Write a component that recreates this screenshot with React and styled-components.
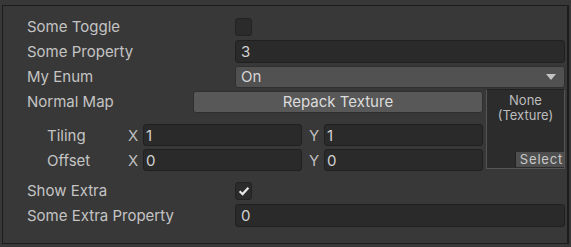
import React from "react";
import styled, { createGlobalStyle } from "styled-components";

const GlobalStyles = createGlobalStyle`
  * {
    margin: 0;
    padding: 0;
    box-sizing: border-box;
  }
  body {
    background: #383838;
    font-family: Inter, "Noto Sans", sans-serif;
    overflow: hidden;
  }
`;

function Check({ checked }) {
  return (
    <Toggle>
      {checked && (
        <svg width="12" height="12" viewBox="0 0 12 12">
          <path d="M1.6 6.2 L4.6 9.1 L10.4 2.8" fill="none" stroke="#e6e6e6" strokeWidth="2.2" />
        </svg>
      )}
    </Toggle>
  );
}

function App() {
  return (
    <>
      <GlobalStyles />
      <Frame>
        <Row>
          <Label>Some Toggle</Label>
          <Check />
        </Row>
        <Row>
          <Label>Some Property</Label>
          <Field>3</Field>
        </Row>
        <Row>
          <Label>My Enum</Label>
          <Enum>
            On
            <Arrow />
          </Enum>
        </Row>
        <TextureBlock>
          <TextureLeft>
            <Row>
              <MapLabel>Normal Map</MapLabel>
              <Button>Repack Texture</Button>
            </Row>
            <SubRows>
              <SubRow>
                <SubLabel>Tiling</SubLabel>
                <Axis>X</Axis>
                <SmallField>1</SmallField>
                <Axis $gap>Y</Axis>
                <SmallField>1</SmallField>
              </SubRow>
              <SubRow>
                <SubLabel>Offset</SubLabel>
                <Axis>X</Axis>
                <SmallField>0</SmallField>
                <Axis $gap>Y</Axis>
                <SmallField>0</SmallField>
              </SubRow>
            </SubRows>
          </TextureLeft>
          <TextureBox>
            <None>
              None
              <br />
              (Texture)
            </None>
            <Select>Select</Select>
          </TextureBox>
        </TextureBlock>
        <Row $top={6}>
          <Label>Show Extra</Label>
          <Check checked />
        </Row>
        <Row>
          <Label>Some Extra Property</Label>
          <Field>0</Field>
        </Row>
      </Frame>
    </>
  );
}

export default App;

const Frame = styled.div`
  margin: 5px 0 0 2px;
  width: 567px;
  height: 239px;
  border: 1px solid #1c1c1c;
  border-right-width: 2px;
  padding: 9px 2px 0 24px;
  display: flex;
  flex-direction: column;
  gap: 2px;
  color: #c4c4c4;
  font-size: 15px;
`;

const Row = styled.div`
  display: flex;
  align-items: center;
  height: 23px;
  margin-top: ${({ $top }) => $top || 0}px;
`;

const Label = styled.div`
  width: 208px;
  flex: none;
  line-height: 23px;
  white-space: nowrap;
`;

const MapLabel = styled(Label)`
  width: 166px;
`;

const Toggle = styled.div`
  width: 17px;
  height: 18px;
  border-radius: 3px;
  background: #2b2b2b;
  border: 1px solid #222;
  display: flex;
  align-items: center;
  justify-content: center;
`;

const Field = styled.div`
  flex: 1;
  height: 23px;
  background: #2a2a2a;
  border: 1px solid #202020;
  border-radius: 3px;
  padding-left: 5px;
  line-height: 21px;
  color: #d2d2d2;
`;

const Enum = styled.div`
  flex: 1;
  height: 22px;
  background: #515151;
  border: 1px solid #303030;
  border-radius: 3px;
  padding: 0 8px 0 5px;
  line-height: 20px;
  color: #d6d6d6;
  display: flex;
  align-items: center;
  justify-content: space-between;
`;

const Arrow = styled.span`
  width: 0;
  height: 0;
  border-left: 5px solid transparent;
  border-right: 5px solid transparent;
  border-top: 6px solid #c4c4c4;
`;

const TextureBlock = styled.div`
  display: flex;
  gap: 3px;
`;

const TextureLeft = styled.div`
  flex: 1;
  display: flex;
  flex-direction: column;
`;

const Button = styled.div`
  flex: 1;
  height: 22px;
  background: #585858;
  border: 1px solid #2f2f2f;
  border-radius: 3px;
  text-align: center;
  line-height: 20px;
  color: #dcdcdc;
`;

const SubRows = styled.div`
  display: flex;
  flex-direction: column;
  gap: 3px;
  margin-top: 11px;
`;

const SubRow = styled.div`
  display: flex;
  align-items: center;
  height: 22px;
`;

const SubLabel = styled.div`
  width: 101px;
  padding-left: 20px;
  flex: none;
`;

const Axis = styled.div`
  width: 15px;
  flex: none;
  color: #bdbdbd;
  margin-left: ${({ $gap }) => ($gap ? 7 : 0)}px;
`;

const SmallField = styled(Field)`
  height: 22px;
  padding-left: 2px;
`;

const TextureBox = styled.div`
  width: 79px;
  height: 80px;
  background: #2c2c2c;
  border: 1px solid #555;
  border-top-color: #202020;
  display: flex;
  flex-direction: column;
  align-items: center;
  justify-content: space-between;
  margin-top: -1px;
`;

const None = styled.div`
  font-size: 13px;
  line-height: 15px;
  text-align: center;
  color: #bdbdbd;
  padding-top: 3px;
`;

const Select = styled.div`
  align-self: flex-end;
  background: #4f4f4f;
  border-left: 1px solid #222;
  color: #c8c8c8;
  font-size: 13px;
  letter-spacing: 0.8px;
  line-height: 14px;
  padding: 0 1px 1px 4px;
  margin-bottom: 1px;
`;
